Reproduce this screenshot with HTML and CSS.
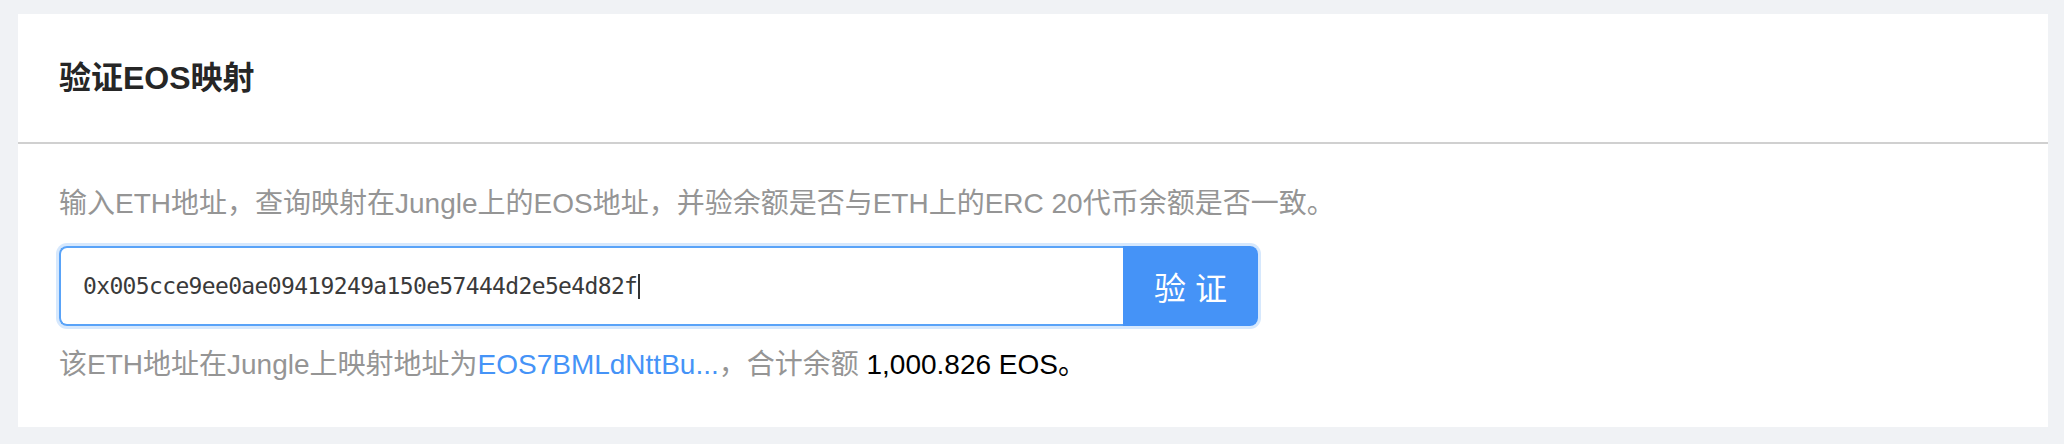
FILE: index.html
```html
<!DOCTYPE html>
<html lang="zh-CN">
<head>
<meta charset="utf-8">
<title>验证EOS映射</title>
<link rel="stylesheet" href="styles.css">
</head>
<body>
  <section class="card">
    <header class="card-head">
      <h2 class="card-title">验证EOS映射</h2>
    </header>
    <div class="card-body">
      <p class="desc">输入ETH地址，查询映射在Jungle上的EOS地址，并验余额是否与ETH上的ERC 20代币余额是否一致。</p>
      <div class="search-group">
        <div class="search-input"><span class="search-value">0x005cce9ee0ae09419249a150e57444d2e5e4d82f</span><span class="caret"></span></div>
        <button class="search-btn" type="button">验 证</button>
      </div>
      <p class="result">该ETH地址在Jungle上映射地址为<a class="result-link" href="#">EOS7BMLdNttBu...</a>，合计余额 <span class="amount">1,000.826 EOS。</span></p>
    </div>
  </section>
</body>
</html>
```
FILE: styles.css
```css
* { box-sizing: border-box; }

html, body {
  margin: 0;
  padding: 0;
}

body {
  background: #f0f2f5;
  padding: 14px 16px 17px 18px;
  font-family: "Liberation Sans", "Noto Sans CJK SC", sans-serif;
}

.card {
  background: #ffffff;
  height: 413px;
}

.card-head {
  height: 130px;
  border-bottom: 2px solid #d0d0d0;
  padding: 0 41px;
  display: flex;
  align-items: center;
}

.card-title {
  margin: 0;
  font-size: 32px;
  font-weight: 700;
  color: #262626;
  line-height: 44px;
}

.card-body {
  padding: 38px 41px 40px;
}

.desc {
  margin: 0 0 20px;
  font-size: 28px;
  line-height: 44px;
  color: #959595;
}

.search-group {
  display: flex;
  width: 1199px;
  height: 80px;
  border-radius: 8px;
  box-shadow: 0 0 0 3px #d6e8fd;
}

.search-input {
  flex: 1;
  display: flex;
  align-items: center;
  border: 2px solid #59a3f8;
  border-right: none;
  border-radius: 8px 0 0 8px;
  padding: 0 22px;
  font-family: "DejaVu Sans Mono", "Liberation Mono", monospace;
  font-size: 23px;
  letter-spacing: -0.65px;
  color: #3a3a3a;
  background: #fff;
}

.caret {
  display: inline-block;
  width: 2px;
  height: 25px;
  background: #333;
  margin-left: 1px;
}

.search-btn {
  width: 135px;
  height: 80px;
  border: none;
  border-radius: 0 8px 8px 0;
  background: #4593f7;
  color: #ffffff;
  font-family: "Liberation Sans", "Noto Sans CJK SC", sans-serif;
  font-size: 32px;
  padding: 0;
  cursor: pointer;
}

.result {
  margin: 17px 0 0;
  font-size: 28px;
  line-height: 44px;
  color: #959595;
}

.result-link {
  color: #4593f7;
  text-decoration: none;
}

.amount {
  color: #000000;
}
```
